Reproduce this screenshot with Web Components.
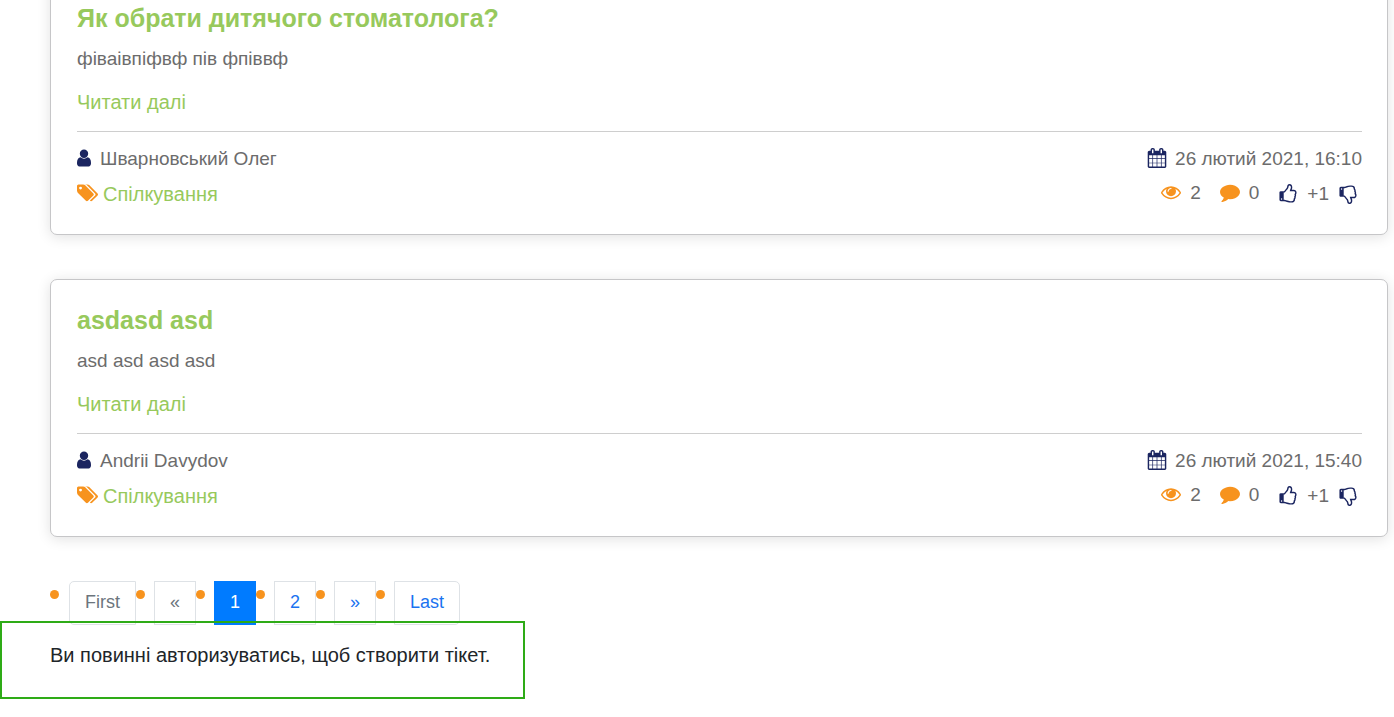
<!DOCTYPE html>
<html lang="uk">
<head>
<meta charset="utf-8">
<title>Спілкування</title>
<style>
  body { margin: 0; background: #fff; color: #212529; font-family: "Liberation Sans", Arial, sans-serif; font-size: 20px; line-height: 30px; overflow-x: hidden; }
</style>
</head>
<body>
<forum-page>
  <post-card author="Шварновський Олег" date="26 лютий 2021, 16:10" views="2" comments="0" rating="+1" tag="Спілкування">
    <span slot="title">Як обрати дитячого стоматолога?</span>
    фіваівпіфвф пів фпіввф
  </post-card>
  <post-card author="Andrii Davydov" date="26 лютий 2021, 15:40" views="2" comments="0" rating="+1" tag="Спілкування">
    <span slot="title">asdasd asd</span>
    asd asd asd asd
  </post-card>
  <page-nav slot="nav"></page-nav>
  <auth-notice slot="notice">Ви повинні авторизуватись, щоб створити тікет.</auth-notice>
</forum-page>

<script>
const THUMB = 'M384 1344q0-26-19-45t-45-19-45 19-19 45 19 45 45 19 45-19 19-45zm1152-576q0-51-39-89.5t-89-38.5h-352q0-58 48-159.5t48-160.5q0-98-32-145t-128-47q-26 26-38 85t-30.5 125.5-59.5 109.5q-22 23-77 91-4 5-23 30t-31.5 41-34.5 42.5-40 44-38.5 35.5-40 27-35.5 9h-32v640h32q13 0 31.5 3t33 6.5 38 11 35 11.5 35.5 12.5 29 10.5q211 73 342 73h121q192 0 192-167 0-26-5-56 30-16 47.5-52.5t17.5-73.5-18-69q53-50 53-119 0-25-10-55.5t-25-47.5q32-1 53.5-47t21.5-81zm128-1q0 89-49 163 9 33 9 69 0 77-38 144 3 21 3 43 0 101-60 178 1 139-85 219.5t-227 80.5h-129q-96 0-189.5-22.5t-216.5-65.5q-116-40-138-40h-288q-53 0-90.5-37.5t-37.5-90.5v-640q0-53 37.5-90.5t90.5-37.5h274q36-24 137-155 58-75 107-128 24-25 35.5-85.5t30.5-126.5 62-108q39-37 90-37 84 0 151 32.5t102 101.5 35 186q0 93-48 192h176q104 0 180 76t76 179z';
const ICONS = {
  user: { box: '256 0 1280 1792', w: 14, d: 'M1536 1399q0 109-62.5 187t-150.5 78h-854q-88 0-150.5-78t-62.5-187q0-85 8.5-160.5t31.5-152 58.5-131 94-89 134.5-34.5q131 128 313 128t313-128q76 0 134.5 34.5t94 89 58.5 131 31.5 152 8.5 160.5zm-256-887q0 159-112.5 271.5t-271.5 112.5-271.5-112.5-112.5-271.5 112.5-271.5 271.5-112.5 271.5 112.5 112.5 271.5z' },
  tags: { box: '128 0 1899 1792', w: 21, d: 'M576 448q0-53-37.5-90.5t-90.5-37.5-90.5 37.5-37.5 90.5 37.5 90.5 90.5 37.5 90.5-37.5 37.5-90.5zm1067 576q0 53-37 90l-491 492q-39 37-91 37-53 0-90-37l-715-716q-38-37-64.5-101t-26.5-117v-416q0-52 38-90t90-38h416q53 0 117 26.5t102 64.5l715 714q37 39 37 91zm384 0q0 53-37 90l-491 492q-39 37-91 37-36 0-59-14t-53-45l470-470q37-37 37-90 0-52-37-91l-715-714q-38-38-102-64.5t-117-26.5h224q53 0 117 26.5t102 64.5l715 714q37 39 37 91z' },
  calendar: { box: '0 0 1792 1792', w: 20, d: 'M192 1664h288v-288h-288v288zm352 0h320v-288h-320v288zm-352-352h288v-320h-288v320zm352 0h320v-320h-320v320zm-352-384h288v-288h-288v288zm736 736h320v-288h-320v288zm-384-736h320v-288h-320v288zm768 736h288v-288h-288v288zm-384-352h320v-320h-320v320zm-352-864v-288q0-13-9.5-22.5t-22.5-9.5h-64q-13 0-22.5 9.5t-9.5 22.5v288q0 13 9.5 22.5t22.5 9.5h64q13 0 22.5-9.5t9.5-22.5zm736 864h288v-320h-288v320zm-384-384h320v-288h-320v288zm384 0h288v-288h-288v288zm32-480v-288q0-13-9.5-22.5t-22.5-9.5h-64q-13 0-22.5 9.5t-9.5 22.5v288q0 13 9.5 22.5t22.5 9.5h64q13 0 22.5-9.5t9.5-22.5zm384-64v1280q0 52-38 90t-90 38h-1408q-52 0-90-38t-38-90v-1280q0-52 38-90t90-38h128v-96q0-66 47-113t113-47h64q66 0 113 47t47 113v96h384v-96q0-66 47-113t113-47h64q66 0 113 47t47 113v96h128q52 0 90 38t38 90z' },
  eye: { box: '0 0 1792 1792', w: 20, d: 'M1664 960q-152-236-381-353 61 104 61 225 0 185-131.5 316.5t-316.5 131.5-316.5-131.5-131.5-316.5q0-121 61-225-229 117-381 353 133 205 333.5 326.5t434.5 121.5 434.5-121.5 333.5-326.5zm-720-384q0-20-14-34t-34-14q-125 0-214.5 89.5t-89.5 214.5q0 20 14 34t34 14 34-14 14-34q0-86 61-147t147-61q20 0 34-14t14-34zm848 384q0 34-20 69-140 230-376.5 368.5t-499.5 138.5-499.5-139-376.5-368q-20-35-20-69t20-69q140-229 376.5-368t499.5-139 499.5 139 376.5 368q20 35 20 69z' },
  comment: { box: '0 0 1792 1792', w: 20, d: 'M1792 896q0 174-120 321.5t-326 233-450 85.5q-70 0-145-8-198 175-460 242-49 14-114 22-17 2-30.5-9t-17.5-29v-1q-3-4-.5-12t2-10 4.5-9.5l6-9 7-8.5 8-9q7-8 31-34.5t34.5-38 31-39.5 32.5-51 27-59 26-76q-157-89-247.5-220t-90.5-281q0-130 71-248.5t191-204.5 286-136.5 348-50.5q244 0 450 85.5t326 233 120 321.5z' },
  like: { box: '0 0 1792 1792', w: 20, d: THUMB },
  dislike: { box: '0 0 1792 1792', w: 20, d: THUMB, flip: true }
};

class FaIcon extends HTMLElement {
  constructor() {
    super();
    this.attachShadow({ mode: 'open' });
  }
  connectedCallback() {
    const i = ICONS[this.getAttribute('name')];
    this.shadowRoot.innerHTML = `
      <style>:host { display: inline-flex; flex: none; } svg { display: block; height: 20px; fill: currentColor; }</style>
      <svg width="${i.w}" viewBox="${i.box}" aria-hidden="true"><path d="${i.d}"${i.flip ? ' transform="matrix(1 0 0 -1 0 1792)"' : ''}/></svg>`;
  }
}
customElements.define('fa-icon', FaIcon);

class PostCard extends HTMLElement {
  constructor() {
    super();
    this.attachShadow({ mode: 'open' });
  }
  connectedCallback() {
    const a = n => this.getAttribute(n);
    this.shadowRoot.innerHTML = `
      <style>
        :host { display: block; }
        article { border: 1px solid #c6c6c8; border-radius: 7px; padding: 25px 25px 25px 26px; background: #fff; box-shadow: 0 2px 14px rgba(0, 0, 0, .12); color: #6c6c6c; font-size: 19px; line-height: 28px; }
        a { color: #97c95c; text-decoration: none; font-size: 20px; line-height: 30px; }
        h2 { margin: 0 0 12px; font-size: 25px; line-height: 30px; }
        h2 a { font-size: inherit; }
        p { margin: 0 0 14px; }
        .more { display: block; width: fit-content; }
        hr { margin: 14px 0 13px; border: 0; border-top: 1px solid #cecece; }
        footer { display: grid; grid-template-columns: 1fr auto; row-gap: 6px; }
        .item, .stats { display: flex; align-items: center; gap: 9px; }
        .item fa-icon { padding-bottom: 2px; }
        .tag { gap: 5px; }
        .date { justify-content: flex-end; gap: 8px; }
        .stats { justify-content: flex-end; gap: 19px; padding-right: 4px; }
        .stats .item { padding-bottom: 2px; }
        .votes { display: flex; align-items: center; gap: 9px; }
        .navy { color: #1b2560; }
        .orange { color: #f7931e; }
        button { display: flex; padding: 0; border: 0; background: none; color: #1b2560; cursor: pointer; }
      </style>
      <article>
        <h2><a href="#"><slot name="title"></slot></a></h2>
        <p><slot></slot></p>
        <a class="more" href="#">Читати далі</a>
        <hr>
        <footer>
          <div class="item"><fa-icon class="navy" name="user"></fa-icon><span>${a('author')}</span></div>
          <div class="item date"><fa-icon class="navy" name="calendar"></fa-icon><time>${a('date')}</time></div>
          <div class="item tag"><fa-icon class="orange" name="tags"></fa-icon><a href="#">${a('tag')}</a></div>
          <div class="stats">
            <span class="item"><fa-icon class="orange" name="eye"></fa-icon><span>${a('views')}</span></span>
            <span class="item"><fa-icon class="orange" name="comment"></fa-icon><span>${a('comments')}</span></span>
            <span class="votes">
              <button type="button" aria-label="Подобається"><fa-icon name="like"></fa-icon></button>
              <span>${a('rating')}</span>
              <button type="button" aria-label="Не подобається"><fa-icon name="dislike"></fa-icon></button>
            </span>
          </div>
        </footer>
      </article>`;
  }
}
customElements.define('post-card', PostCard);

class PageNav extends HTMLElement {
  constructor() {
    super();
    this.attachShadow({ mode: 'open' }).innerHTML = `
      <style>
        :host { display: block; }
        ul { display: flex; margin: 0; padding: 0; list-style: none; font-size: 18px; line-height: 22px; }
        li { display: flex; }
        li::before { content: ""; width: 9px; height: 9px; margin: 9px 9px 0 0; border-radius: 50%; background: #f7931e; }
        li:first-child::before { margin-right: 10px; }
        a, span { box-sizing: border-box; padding: 9px 15px 11px; border: 1px solid #dee2e6; background: #fff; color: #1a73f0; text-decoration: none; }
        span { color: #6c757d; }
        [aria-current] { border-color: #007bff; background: #007bff; color: #fff; }
        li:first-child > * { border-radius: 5px 0 0 5px; }
        li:last-child > * { border-radius: 0 5px 5px 0; }
      </style>
      <nav aria-label="Сторінки"><ul>
        <li><span>First</span></li>
        <li><span>«</span></li>
        <li><a href="#" aria-current="page">1</a></li>
        <li><a href="#">2</a></li>
        <li><a href="#">»</a></li>
        <li><a href="#">Last</a></li>
      </ul></nav>`;
  }
}
customElements.define('page-nav', PageNav);

class AuthNotice extends HTMLElement {
  constructor() {
    super();
    this.attachShadow({ mode: 'open' }).innerHTML = `
      <style>
        :host { display: block; position: relative; width: fit-content; box-sizing: border-box; padding: 17px 33px 27px 48px; border: 2px solid #2eab17; }
        p { margin: 0; }
      </style>
      <p><slot></slot></p>`;
  }
}
customElements.define('auth-notice', AuthNotice);

class ForumPage extends HTMLElement {
  constructor() {
    super();
    this.attachShadow({ mode: 'open' }).innerHTML = `
      <style>
        /* the feed is scrolled: the first card begins above the window */
        :host { display: block; margin-top: -23px; }
        main { display: flex; flex-direction: column; gap: 44px; padding: 0 6px 0 50px; }
        aside { margin-top: -4px; }
      </style>
      <main><slot></slot><slot name="nav"></slot></main>
      <aside><slot name="notice"></slot></aside>`;
  }
}
customElements.define('forum-page', ForumPage);
</script>
</body>
</html>
